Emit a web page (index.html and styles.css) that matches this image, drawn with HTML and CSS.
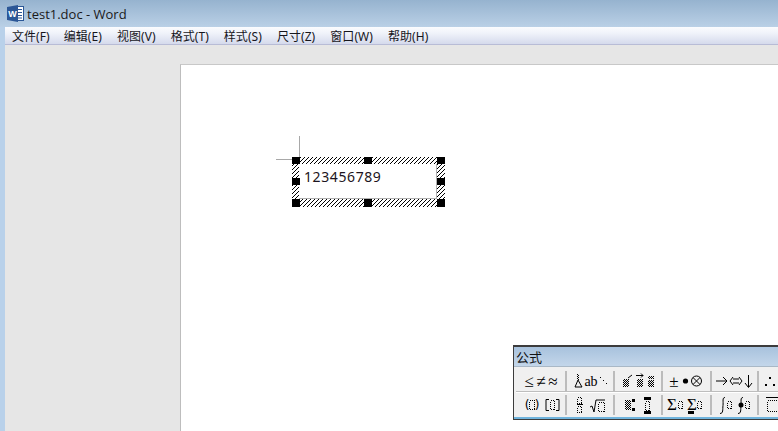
FILE: index.html
```html
<!DOCTYPE html>
<html lang="zh">
<head>
<meta charset="utf-8">
<title>test1.doc - Word</title>
<link rel="stylesheet" href="styles.css">
</head>
<body>
<header class="titlebar">
  <svg class="app-icon" width="17" height="17" viewBox="0 0 17 17">
    <rect x="6.5" y="1.5" width="10" height="14" fill="#fff" stroke="#2b5797"/>
    <path d="M9 4.5h6M9 7.5h6M9 10.5h6M9 13h6" stroke="#2b5797"/>
    <path d="M0 2 L11 0 V17 L0 15 Z" fill="#2b5797"/>
    <text class="app-w" x="5.4" y="12" text-anchor="middle">W</text>
  </svg>
  <span class="title-text">test1.doc - Word</span>
</header>
<div class="frame">
  <nav class="menubar">
    <span class="menu-first">文件(F)</span><span>编辑(E)</span><span>视图(V)</span><span>格式(T)</span><span>样式(S)</span><span>尺寸(Z)</span><span>窗口(W)</span><span>帮助(H)</span>
  </nav>
  <main class="workspace">
    <section class="page">
      <div class="crosshair-v"></div>
      <div class="crosshair-h"></div>
      <div class="selection">
        <div class="selection-inner">123456789</div>
        <i class="handle h-tl"></i><i class="handle h-tc"></i><i class="handle h-tr"></i>
        <i class="handle h-ml"></i><i class="handle h-mr"></i>
        <i class="handle h-bl"></i><i class="handle h-bc"></i><i class="handle h-br"></i>
      </div>
    </section>
  </main>
</div>

<aside class="palette">
  <div class="palette-title">公式</div>
  <div class="palette-body">
    <div class="tool-row">
      <div class="tool-group g1">
        <svg width="50" height="20" viewBox="516 372 50 20">
          <defs>
            <pattern id="dith" width="2" height="2" patternUnits="userSpaceOnUse">
              <rect width="1" height="1" fill="#000"/><rect x="1" y="1" width="1" height="1" fill="#000"/>
            </pattern>
          </defs>
          <text class="sym" x="529" y="388" text-anchor="middle">≤</text>
          <text class="sym" x="541" y="388" text-anchor="middle">≠</text>
          <text class="sym" x="553" y="388" text-anchor="middle">≈</text>
        </svg>
      </div>
      <div class="tool-group g2">
        <svg width="47" height="20" viewBox="567 372 47 20">
          <rect x="577" y="375" width="2" height="6" fill="url(#dith)"/>
          <path class="line" d="M578 381 L575 388 H582 L578 381"/>
          <text class="sym-serif" x="591" y="387" text-anchor="middle">ab</text>
          <path class="dots" d="M600 378h1M603 381h1M606 384h1"/>
        </svg>
      </div>
      <div class="tool-group g3">
        <svg width="47" height="20" viewBox="615 372 47 20">
          <rect x="623" y="380" width="6" height="8" fill="url(#dith)"/>
          <path class="line" d="M628 379 L632 376"/>
          <rect x="637" y="380" width="6" height="8" fill="url(#dith)"/>
          <path class="line" d="M636 376.5H643M641 374.5l2 2-2 2"/>
          <rect x="648" y="377" width="6" height="3" fill="url(#dith)"/>
          <rect x="648" y="381" width="6" height="7" fill="url(#dith)"/>
        </svg>
      </div>
      <div class="tool-group g4">
        <svg width="48" height="20" viewBox="663 372 48 20">
          <text class="sym" x="674" y="388" text-anchor="middle">±</text>
          <circle cx="685.5" cy="382" r="2.6" fill="#000"/>
          <circle class="line" cx="696.5" cy="382" r="5"/>
          <path class="line" d="M693 378.5l7 7M700 378.5l-7 7"/>
        </svg>
      </div>
      <div class="tool-group g5">
        <svg width="46" height="20" viewBox="712 372 46 20">
          <path class="line" d="M716 382H727M723 378l4 4-4 4"/>
          <path class="line" d="M733 380h6M733 384h6M733 378l-3 4 3 4M739 378l3 4-3 4"/>
          <path class="line" d="M748.5 376V388M745 384l3.5 4.500 3.500-4.500"/>
        </svg>
      </div>
      <div class="tool-group g6">
        <svg width="19" height="20" viewBox="759 372 19 20">
          <rect x="769" y="378" width="2" height="2" fill="#000"/>
          <rect x="765" y="385" width="2" height="2" fill="#000"/>
          <rect x="773" y="385" width="2" height="2" fill="#000"/>
        </svg>
      </div>
    </div>
    <div class="tool-row second">
      <div class="tool-group g1">
        <svg width="50" height="20" viewBox="516 396 50 20">
          <text class="sym-sm" x="527" y="410" text-anchor="middle">(</text>
          <rect class="dash" x="529.500" y="401.500" width="5" height="9"/>
          <text class="sym-sm" x="537" y="410" text-anchor="middle">)</text>
          <path class="line" d="M549 400.500h-3v11h3M556 400.500h3v11h-3"/>
          <rect class="dash" x="550.500" y="401.500" width="4" height="9"/>
        </svg>
      </div>
      <div class="tool-group g2">
        <svg width="47" height="20" viewBox="567 396 47 20">
          <rect class="dash" x="577.500" y="398.500" width="4" height="6"/>
          <path class="line" d="M577 405.500H583"/>
          <rect class="dash" x="577.500" y="407.500" width="4" height="6"/>
          <path class="line" d="M590 408l2-1 2 6 2-12H605"/>
          <rect class="dash" x="598.500" y="403.500" width="6" height="9"/>
        </svg>
      </div>
      <div class="tool-group g3">
        <svg width="47" height="20" viewBox="615 396 47 20">
          <rect x="625" y="401" width="6" height="10" fill="url(#dith)"/>
          <rect x="632" y="400" width="3" height="3" fill="#000"/>
          <rect x="632" y="409" width="3" height="3" fill="#000"/>
          <rect x="644" y="398" width="7" height="3" fill="#000"/>
          <rect class="dash" x="645.500" y="402.500" width="4" height="9"/>
          <rect x="644" y="412" width="7" height="3" fill="#000"/>
        </svg>
      </div>
      <div class="tool-group g4">
        <svg width="48" height="20" viewBox="663 396 48 20">
          <text class="sigma" x="672" y="411" text-anchor="middle">Σ</text>
          <rect class="dash" x="678.500" y="402.500" width="4" height="7"/>
          <text class="sigma" x="692" y="411" text-anchor="middle">Σ</text>
          <rect x="688" y="412" width="6" height="3" fill="#000"/>
          <rect class="dash" x="697.500" y="402.500" width="4" height="7"/>
        </svg>
      </div>
      <div class="tool-group g5">
        <svg width="46" height="20" viewBox="712 396 46 20">
          <path class="line" d="M725 398.500c-3 0-1.500 4-2 8s.5 8-3 8"/>
          <rect class="dash" x="727.500" y="402.500" width="4" height="7"/>
          <path class="line" d="M743 398.500c-3 0-1.500 4-2 8s.5 8-3 8"/>
          <circle cx="741" cy="406" r="2.500" fill="#000"/>
          <rect class="dash" x="745.500" y="402.500" width="4" height="7"/>
        </svg>
      </div>
      <div class="tool-group g6">
        <svg width="19" height="20" viewBox="759 396 19 20">
          <path class="line" d="M766 398.500H778"/>
          <rect class="dash" x="767.500" y="401.500" width="11" height="11"/>
        </svg>
      </div>
    </div>
  </div>
</aside>
</body>
</html>
```
FILE: styles.css
```css
* { box-sizing: border-box; }
html, body { margin: 0; height: 100%; }
body {
  width: 778px;
  height: 431px;
  overflow: hidden;
  position: relative;
  display: flex;
  flex-direction: column;
  background: #b9d1ea;
  font-family: "Noto Sans", "Noto Sans CJK SC", sans-serif;
  color: #111;
}
.titlebar {
  height: 27px;
  flex: none;
  display: flex;
  align-items: center;
  padding-left: 7px;
  gap: 3px;
  background: linear-gradient(#96b3cf, #bad0e6);
}
.app-w { font: bold 9px "Liberation Sans", sans-serif; fill: #fff; }
.title-text {
  font: 13px "Open Sans", sans-serif;
  color: #1a1a1a;
}
.frame {
  flex: 1;
  margin-left: 5px;
  display: flex;
  flex-direction: column;
  min-height: 0;
}
.menubar {
  height: 18px;
  flex: none;
  display: flex;
  align-items: center;
  gap: 15px;
  padding-left: 7px;
  font-size: 12px;
  letter-spacing: 0.060px;
  background: linear-gradient(#fbfcfe, #f0f3fa 35%, #d5daec);
  border-bottom: 1px solid #b8bcd6;
  color: #16161c;
}
.menu-first { margin-right: -1px; }
.workspace {
  flex: 1;
  display: flex;
  min-height: 0;
  padding: 19px 0 0 175px;
  background: #e6e6e6;
}
.page {
  flex: 1;
  position: relative;
  background: #fff;
  border-left: 1px solid #bdbdbd;
  border-top: 1px solid #c8c8c8;
  padding: 92px 0 0 111px;
}
.crosshair-v {
  position: absolute;
  left: 118px;
  top: 71px;
  width: 1px;
  height: 21px;
  background: #a8a8a8;
}
.crosshair-h {
  position: absolute;
  left: 95px;
  top: 94px;
  width: 16px;
  height: 1px;
  background: #a8a8a8;
}
.selection {
  position: relative;
  width: 153px;
  height: 50px;
  padding: 7px 8px 8px 7px;
  background: repeating-linear-gradient(135deg, #000 0, #000 1.300px, #fff 1.300px, #fff 2.830px);
}
.selection-inner {
  height: 100%;
  background: #fff;
  border-right: 1px solid #b0b0b0;
  border-bottom: 1px solid #b0b0b0;
  padding: 3px 0 0 5px;
  font: 14px/20px "Noto Sans", sans-serif;
  letter-spacing: 0.600px;
  color: #1c1420;
}
.handle {
  position: absolute;
  width: 8px;
  height: 7px;
  background: #000;
}
.h-tl { left: 0; top: 0; }
.h-tc { left: 72px; top: 0; }
.h-tr { right: 0; top: 0; }
.h-ml { left: 0; top: 21px; }
.h-mr { right: 0; top: 21px; }
.h-bl { left: 0; bottom: 0; height: 8px; }
.h-bc { left: 72px; bottom: 0; height: 8px; }
.h-br { right: 0; bottom: 0; height: 8px; }

.palette {
  position: absolute;
  left: 513px;
  top: 345px;
  width: 280px;
  height: 75px;
  display: flex;
  flex-direction: column;
  border: 1px solid #3c3c3c;
  border-top-width: 2px;
  background: #f0f0f0;
}
.palette-title {
  height: 20px;
  flex: none;
  padding-left: 2px;
  font-size: 13px;
  line-height: 20px;
  color: #111;
  background: linear-gradient(#a8c2dd, #c3d6ea);
  border-bottom: 1px solid #a9b8c6;
}
.palette-body {
  flex: 1;
  padding-left: 2px;
  border-bottom: 2px solid #6fb3dc;
}
.tool-row {
  display: flex;
  padding-top: 4px;
  height: 25px;
  border-bottom: 1px solid #bdbdbd;
}
.tool-row.second { border-bottom: 0; border-top: 1px solid #fff; padding-top: 2px; height: 24px; }
.tool-group {
  height: 20px;
  display: flex;
  border-right: 2px solid #bcbcbc;
}
.tool-group svg { display: block; flex: none; }
.g1 { width: 51px; }
.g2, .g3 { width: 48px; }
.g4 { width: 49px; }
.g5 { width: 47px; }
.g6 { width: 30px; border-right: 0; }
.sym { font: 17px "Liberation Serif", serif; fill: #000; }
.sym-sm { font: 12px "DejaVu Sans", sans-serif; fill: #000; }
.sym-serif { font: 14px "Liberation Serif", serif; fill: #000; }
.sigma { font: 17px "Liberation Serif", serif; fill: #000; }
.line { fill: none; stroke: #000; stroke-width: 1; }
.dots { fill: none; stroke: #000; stroke-width: 1; shape-rendering: crispEdges; }
.dash { fill: none; stroke: #000; stroke-width: 1; stroke-dasharray: 1 1; shape-rendering: crispEdges; }
```
